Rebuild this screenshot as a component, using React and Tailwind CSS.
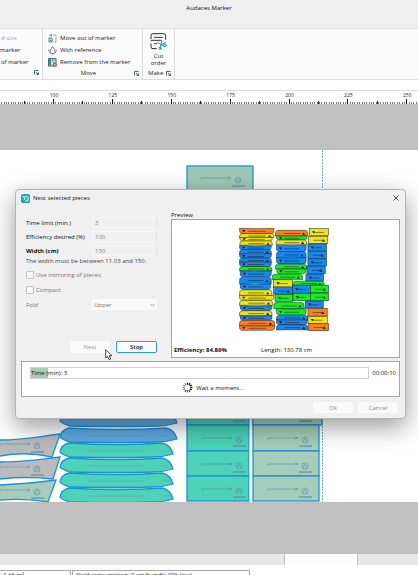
import React, { useState } from "react";

const OUTLINE = "#1b93d8";

// Pieces of the small nesting preview: shape, fill, x, y, width, height
const nestedPieces = [
  ["lens", "o", 22, 20, 104, 16], ["lens", "y", 22, 36, 104, 12], ["lens", "y", 23, 47, 98, 12], ["lens", "y", 23, 58, 98, 13],
  ["lens", "b", 22, 72, 96, 13], ["lens", "b", 22, 84, 96, 13], ["lens", "b", 22, 97, 96, 13], ["lens", "b", 22, 109, 96, 13],
  ["lens", "b", 22, 122, 96, 13], ["lens", "g", 22, 135, 98, 13], ["lens", "b", 24, 148, 94, 18], ["lens", "b", 22, 167, 96, 19],
  ["lens", "b", 24, 187, 92, 17], ["lens", "y", 22, 205, 98, 17], ["lens", "y", 22, 222, 104, 14], ["lens", "y", 22, 237, 100, 15],
  ["lens", "b", 24, 253, 96, 14], ["lens", "y", 22, 268, 98, 15], ["lens", "b", 24, 283, 96, 14], ["lens", "o", 22, 297, 106, 16],
  ["lens", "o", 22, 313, 106, 14],
  ["lens", "o", 130, 26, 98, 17], ["lens", "g", 133, 43, 92, 12], ["lens", "y", 132, 55, 93, 14], ["lens", "b", 133, 71, 90, 19],
  ["lens", "b", 133, 90, 90, 18], ["lens", "b", 133, 108, 90, 19], ["lens", "g", 130, 128, 95, 14], ["lens", "g", 134, 142, 88, 15],
  ["lens", "g", 120, 158, 92, 16], ["rect", "y", 125, 175, 57, 21], ["rect", "b", 125, 198, 57, 20], ["rect", "g", 129, 219, 54, 21],
  ["lens", "g", 125, 243, 92, 19], ["lens", "g", 133, 262, 90, 19], ["lens", "b", 133, 282, 95, 14], ["lens", "b", 133, 296, 93, 14],
  ["lens", "b", 133, 310, 95, 16],
  ["rect", "y", 232, 21, 58, 21], ["rect", "y", 230, 44, 58, 22], ["rect", "b", 228, 67, 56, 21], ["rect", "b", 228, 89, 56, 22],
  ["rect", "b", 228, 112, 56, 21], ["rect", "b", 225, 134, 55, 23], ["rect", "b", 222, 158, 53, 21], ["lens", "g", 182, 179, 95, 12],
  ["rect", "b", 182, 192, 53, 23], ["rect", "g", 236, 191, 54, 23], ["rect", "g", 183, 216, 52, 22], ["rect", "g", 236, 215, 54, 23],
  ["rect", "b", 220, 239, 54, 21], ["rect", "o", 228, 261, 58, 23], ["rect", "y", 228, 285, 58, 21], ["rect", "o", 230, 307, 60, 21],
];

const pieceColors = { o: "#ff7f14", y: "#f2e410", b: "#1488f4", g: "#10f01c" };

const NestPreview = () => (
  <svg viewBox="18 16 276 316" className="w-[92px] h-[105px]">
    {nestedPieces.map(([shape, color, x, y, w, h], index) => {
      const mid = y + h / 2 + 1;
      const flip = index % 2 === 0;
      const tip = flip ? x + 13 : x + w - 13;
      return (
        <g key={index} stroke="#101820" strokeWidth="1.5">
          {shape === "rect" ? (
            <rect x={x} y={y} width={w} height={h} fill={pieceColors[color]} />
          ) : (
            <path
              fill={pieceColors[color]}
              d={
                flip
                  ? `M${x} ${y} Q${x + w / 2} ${y + 2} ${x + w} ${y} L${x + w - 1} ${y + h - 4} L${x + w - 7} ${y + h} H${x + 7} L${x + 1} ${y + h - 4} Z`
                  : `M${x + 7} ${y} H${x + w - 7} L${x + w - 1} ${y + 4} L${x + w} ${y + h} Q${x + w / 2} ${y + h - 2} ${x} ${y + h} L${x + 1} ${y + 4} Z`
              }
            />
          )}
          <path d={`M${x + w * 0.26} ${mid} H${x + w * 0.76}`} />
          <path
            fill="#101820"
            stroke="none"
            d={flip ? `M${tip - 5} ${mid - 4} h10 l-5 7 z` : `M${tip - 5} ${mid + 4} h10 l-5 -7 z`}
          />
        </g>
      );
    })}
  </svg>
);

// Grain line arrow and the size mark printed on every piece
const PieceMark = ({ x, y }) => (
  <g stroke="#5d88ad" strokeWidth="0.8" fill="none" opacity="0.7">
    <path d={`M${x} ${y + 2} v-2 h30 m-3 -1 l3 1 l-3 1`} />
    <circle cx={x + 37} cy={y + 2} r="3" />
    <path d={`M${x + 35} ${y + 4} l2 -4 l2 4`} />
    <path d={`M${x + 31} ${y + 8} h13`} strokeWidth="1.5" />
  </g>
);

const lensRows = [
  { y: 262, w: 117, fill: "#5fa9e4" },
  { y: 278, w: 117, fill: "#5fa9e4" },
  { y: 293, w: 113, fill: "#4cd3b8" },
  { y: 308, w: 113, fill: "#4cd3b8" },
  { y: 323, w: 113, fill: "#4cd3b8" },
  { y: 338, w: 113, fill: "#4cd3b8" },
];

const MarkerCanvas = () => (
  <svg width="100%" height="352" className="block bg-white" stroke={OUTLINE} strokeWidth="1.3">
    <path d="M0 290 C25 290 35 287 60 284 L52 307 Q25 301 0 306" fill="#b9bbbd" />
    <path d="M0 312 C25 312 35 310 60 307 L53 329 Q25 326 0 329" fill="#b9bbbd" />
    <path d="M0 335 C20 334 35 333 56 330 L48 352 Q25 348 0 350" fill="#a6cdba" />
    {[298, 321, 344].map((y) => (
      <PieceMark key={y} x={0} y={y - 4} />
    ))}
    {lensRows.map(({ y, w, fill }) => (
      <g key={y}>
        <path
          fill={fill}
          d={`M69 ${y} Q118 ${y + 3} ${w + 49} ${y} Q${w + 58} ${y + 2} ${w + 60} ${y + 11} Q${w + 50} ${y + 14} ${w + 40} ${y + 14} Q118 ${y + 15} 70 ${y + 14} Q63 ${y + 12} 60 ${y + 9} Q61 ${y + 2} 69 ${y} Z`}
        />
        <path d={`M88 ${y + 8} h56 M160 ${y + 8} h10`} stroke="#6794ad" strokeWidth="0.8" opacity="0.6" />
      </g>
    ))}
    <rect x="187" y="16" width="66" height="260" fill="#9fc9b6" />
    <PieceMark x={201} y={28} />
    {[250, 275, 301, 326].map((y) => (
      <g key={y}>
        <rect x="187" y={y} width="62" height={y === 275 ? 26 : 25} fill="#4cd3b8" />
        <PieceMark x={202} y={y + 13} />
      </g>
    ))}
    <path d="M251 260 V352" stroke="white" strokeWidth="3" />
    {[250, 275, 301, 326].map((y) => (
      <g key={y}>
        <rect x="253" y={y} width={y === 250 ? 69 : 66} height={y === 275 ? 26 : 25} fill="#a6cdba" />
        <PieceMark x={268} y={y + 13} />
      </g>
    ))}
    <path d="M322.5 0 V352" strokeWidth="1" strokeDasharray="2 1" stroke="#6fa9cc" />
  </svg>
);

const unit = 2.355;

const Ruler = () => (
  <svg width="100%" height="14" className="block border-t border-[#dcdcdc] bg-white">
    {Array.from({ length: 180 }, (_, i) => i + 78).map((value) => {
      const height = value % 25 === 0 ? 5 : 2;
      return (
        <rect
          key={value}
          x={Math.round(53 + (value - 100) * unit)}
          y={13 - height}
          width="1"
          height={height}
          fill={height === 5 ? "#111111" : "#777777"}
        />
      );
    })}
    {[87.5, 112.5, 137.5, 162.5, 187.5, 212.5, 237.5].map((value) => (
      <rect key={value} x={Math.round(53 + (value - 100) * unit)} y="10" width="1" height="3" fill="#222222" />
    ))}
    {[100, 125, 150, 175, 200, 225, 250].map((value) => (
      <text key={value} x={54 + (value - 100) * unit} y="6" fontSize="5" textAnchor="middle" fill="#222222">
        {value}
      </text>
    ))}
  </svg>
);

const Launcher = () => (
  <button aria-label="More options" className="block">
    <svg width="5" height="5" viewBox="0 0 10 10" fill="none" stroke="#1f5f6b" strokeWidth="1.8">
      <path d="M1 9 V1 H9 M4 4 L9 9 M9 5 V9 H5" />
    </svg>
  </button>
);

const MoveOutIcon = () => (
  <svg width="9" height="9" viewBox="0 0 27 27" fill="none">
    <path d="M3 12 h9 v12 h-9 z" stroke="#4d5357" strokeWidth="2.5" />
    <path d="M4 6 q1 -4 7 -3 M8 0 l4 3 l-4 4" stroke="#1896a8" strokeWidth="2.5" />
    <path d="M16 3 h8 v21 h-8" stroke="#333333" strokeWidth="2" strokeDasharray="4 3" />
    <path d="M6 17 h4 v4 h-4 z" fill="#1896a8" />
  </svg>
);

const ReferenceIcon = () => (
  <svg width="9" height="9" viewBox="0 0 27 27" fill="none">
    <path d="M10 7 L13.500 2 L17 7 L20 10 L22 20 L16 22 H11 L5 20 L7 10 Z" stroke="#333333" strokeWidth="2.2" />
    <path d="M0 13 h3 M24 13 h3 M11 24 h5" stroke="#1896a8" strokeWidth="3" />
  </svg>
);

const RemoveIcon = () => (
  <svg width="9" height="9" viewBox="0 0 27 27" fill="none">
    <rect x="2" y="2" width="22" height="22" fill="#d6eef0" stroke="#2b4248" strokeWidth="2.5" />
    <path d="M3 3 h6 v20 h-6 z" fill="#1896a8" />
    <path d="M12 6 h9 M12 6 l6 9" stroke="#1896a8" strokeWidth="2.5" />
    <circle cx="20" cy="20" r="6.500" fill="#e04848" />
    <path d="M17.500 17.500 l5 5 m0 -5 l-5 5" stroke="white" strokeWidth="1.8" />
  </svg>
);

const CutOrderIcon = () => (
  <svg width="17" height="17" viewBox="0 0 51 51" fill="none" strokeLinecap="round">
    <path d="M19 47 H9 Q3 47 3 41 V33 M3 17 V8 Q3 2 9 2 H41 Q47 2 47 8 V19" stroke="#262c30" strokeWidth="3" />
    <path d="M13 13 H37 M3 22 H33 M13 32 H20" stroke="#262c30" strokeWidth="2.800" />
    <path d="M23 29 L41 39 M31 44 L35 25" stroke="#149cae" strokeWidth="3" />
    <circle cx="45" cy="37" r="4" stroke="#149cae" strokeWidth="3" />
    <circle cx="30" cy="46" r="3.500" stroke="#149cae" strokeWidth="3" />
    <path d="M33 36 L46 28" stroke="#149cae" strokeWidth="3" />
  </svg>
);

const moveActions = [
  { label: "Move out of marker", icon: <MoveOutIcon /> },
  { label: "With reference", icon: <ReferenceIcon /> },
  { label: "Remove from the marker", icon: <RemoveIcon /> },
];

const Ribbon = () => (
  <nav className="flex h-[52px] shrink-0 border-y border-[#dcdcdc] bg-[#fbfbfb] text-[#222222]">
    <div className="flex w-[43px] flex-col justify-between border-r border-[#dcdcdc] pt-[3px] pb-1">
      <div className="flex flex-col items-start whitespace-nowrap leading-[12px]">
        <button className="pl-px text-[#a0a0a0]" disabled>d size</button>
        <button>marker</button>
        <button className="pl-px">of marker</button>
      </div>
      <div className="flex justify-end pr-[3px]"><Launcher /></div>
    </div>
    <div className="flex w-[100px] flex-col justify-between border-r border-[#dcdcdc] pt-[3px] pb-[3px]">
      <div className="flex flex-col items-start pl-[5px] leading-[12px]">
        {moveActions.map(({ label, icon }) => (
          <button key={label} className="flex items-center gap-[3px] whitespace-nowrap">
            {icon}
            {label}
          </button>
        ))}
      </div>
      <div className="flex items-center pr-[3px] leading-[6px]">
        <span className="flex-1 text-center">Move</span>
        <Launcher />
      </div>
    </div>
    <div className="flex w-8 flex-col justify-between border-r border-[#dcdcdc] pt-1 pb-[3px]">
      <button className="flex flex-col items-center leading-[7px]">
        <CutOrderIcon />
        <span className="pt-[3px]">Cut</span>
        <span>order</span>
      </button>
      <div className="flex items-center justify-between pr-[3px] pl-[5px] leading-[6px]">
        <span>Make</span>
        <Launcher />
      </div>
    </div>
  </nav>
);

const Cursor = () => (
  <svg width="8" height="12" viewBox="0 0 24 36" className="absolute top-2 left-[35px]">
    <path d="M2 2 V27 L8 22 L12 32 L17 30 L13 20 H21 Z" fill="white" stroke="#222222" strokeWidth="2.4" />
  </svg>
);

const Spinner = () => (
  <svg width="11" height="11" viewBox="-11 -11 22 22" strokeWidth="2.600">
    {[0, 30, 60, 90, 120, 150, 180, 210, 240, 270, 300, 330].map((angle) => (
      <path
        key={angle}
        d="M0 -5.500 V-10"
        transform={`rotate(${angle})`}
        stroke={angle < 150 ? "#1c1c1c" : angle < 240 ? "#555555" : "#8c8c8c"}
      />
    ))}
  </svg>
);

const fields = [
  { id: "time", label: "Time limit (min.)", value: "3" },
  { id: "efficiency", label: "Efficiency desired (%)", value: "100" },
  { id: "width", label: "Width (cm)", value: "150", bold: true },
];

const NestDialog = () => {
  const [open, setOpen] = useState(true);

  if (!open) {
    return null;
  }

  return (
    <section
      role="dialog"
      aria-label="Nest selected pieces"
      className="absolute top-[189px] right-3 left-[15px] rounded border border-[#b4b4b4] bg-[#f0f0f0] px-[5px] pb-[5px] text-[#111111] shadow-[0_8px_24px_rgba(0,0,0,0.4)]"
    >
      <header className="flex h-4 items-center gap-[3px]">
        <svg width="9" height="9" viewBox="0 0 27 27" fill="none">
          <rect width="27" height="27" rx="5" fill="#18a8b8" />
          <path d="M5 8 h5 v10 M13 10 l5 -4 l4 4 v3 l-4 1 l4 3 l-3 4 h-6" stroke="white" strokeWidth="3" />
        </svg>
        <h1 className="flex-1 font-medium">Nest selected pieces</h1>
        <button aria-label="Close" className="pr-px">
          <svg width="6" height="6" viewBox="0 0 12 12" stroke="#333333" strokeWidth="1.8" onClick={() => setOpen(false)}>
            <path d="M1 1 L11 11 M11 1 L1 11" />
          </svg>
        </button>
      </header>

      <div className="flex gap-[14px] pt-[6px]">
        <form className="flex w-[136px] shrink-0 flex-col pt-[5px] pl-[5px]" onSubmit={(e) => e.preventDefault()}>
          <div className="flex flex-col gap-[3px]">
            {fields.map(({ id, label, value, bold }) => (
              <div key={id} className="flex h-[11px] items-center">
                <label htmlFor={id} className={bold ? "w-[66px] font-bold" : "w-[66px] font-medium"}>{label}</label>
                <input
                  id={id}
                  defaultValue={value}
                  disabled
                  className="h-[11px] w-0 flex-1 border border-[#f6f6f6] border-r-[#e2e2e2] px-[2px] text-[#8a8a8a]"
                />
              </div>
            ))}
          </div>
          <p className="pt-px leading-[9px] whitespace-nowrap text-[#444444]">The width must be between 11.03 and 150.</p>
          <div className="flex flex-col gap-[6px] pt-1 text-[#777777]">
            {["Use mirroring of pieces", "Compact"].map((label) => (
              <label key={label} className="flex h-[9px] items-center gap-[2px]">
                <input type="checkbox" disabled className="size-2 appearance-none rounded-[1px] border border-[#c4c4c4] bg-[#f7f7f7]" />
                {label}
              </label>
            ))}
          </div>
          <div className="flex items-center pt-[5px] text-[#777777]">
            <label htmlFor="fold" className="w-[66px]">Fold</label>
            <div className="relative flex-1">
              <select id="fold" disabled className="h-[11px] w-full appearance-none rounded-[1px] bg-[#fafafa] px-[2px] text-[#777777]">
                <option>Upper</option>
              </select>
              <svg width="5" height="4" viewBox="0 0 10 8" className="absolute top-1 right-[2px]" fill="none" stroke="#999999" strokeWidth="1.8">
                <path d="M1 2 L5 6 L9 2" />
              </svg>
            </div>
          </div>
          <div className="flex justify-end gap-[6px] pt-[31px]">
            <div className="relative">
              <button disabled className="h-3 w-10 rounded-[2px] bg-[#fafafa] text-[#999999]">Nest</button>
              <Cursor />
            </div>
            <button className="h-3 w-[41px] rounded-[2px] border border-[#2a9fd6] bg-[#fafafa] font-semibold">Stop</button>
          </div>
        </form>

        <div className="flex min-w-0 flex-1 flex-col">
          <h2 className="leading-[7px]">Preview</h2>
          <div className="flex flex-col border border-[#a4a4a4] bg-white">
            <div className="flex h-[123px] justify-center pt-[7px] pr-[3px]">
              <NestPreview />
            </div>
            <div className="flex h-[14px] items-center px-[2px]">
              <strong className="w-[87px]">Efficiency: 84.86%</strong>
              <span>Length: 130.78 cm</span>
            </div>
          </div>
        </div>
      </div>

      <div className="mt-[3px] border border-[#a4a4a4] bg-white pt-[5px] pr-[3px] pl-2">
        <div className="flex items-center gap-[3px]">
          <div className="flex h-3 flex-1 items-center border border-[#d0d0d0] bg-linear-to-r from-[#a3cdb7] from-5% to-white to-5% font-medium">
            Time (min): 3
          </div>
          <time className="font-medium">00:00:10</time>
        </div>
        <div className="flex h-[17px] items-center justify-center gap-[3px] font-medium">
          <Spinner />
          Wait a moment...
        </div>
      </div>

      <footer className="flex justify-end gap-[5px] pt-[5px] pr-[2px] text-[#8c8c8c]">
        <button disabled className="h-[11px] w-10 rounded-[2px] bg-[#fafafa]">Ok</button>
        <button disabled className="h-[11px] w-10 rounded-[2px] bg-[#fafafa]">Cancel</button>
      </footer>
    </section>
  );
};

const App = () => {
  return (
    <div className="relative flex h-screen flex-col overflow-hidden bg-white font-['Open_Sans',sans-serif] text-[6px] leading-[8px]">
      <header className="flex h-7 shrink-0 justify-center bg-[#efefef] pt-1 font-medium text-[#111111]">Audaces Marker</header>
      <Ribbon />
      <main className="pt-[10px]">
        <Ruler />
        <div className="bg-[#c0c0c0] pt-[46px] pb-[52px]">
          <MarkerCanvas />
        </div>
        {/* Horizontal scrollbar */}
        <div className="flex h-[11px] bg-[#e7e7e7] pl-[68%]">
          <div className="w-[74px] border-x border-[#c0c0c0] bg-[#fcfcfc]"></div>
        </div>
      </main>
      <footer className="flex gap-px pt-[5px] leading-[8px] whitespace-nowrap text-[#222222]">
        <div className="w-[71px] border border-l-0 border-[#a8a8a8]">: 1.66 m²</div>
        <div className="w-[178px] border border-[#a8a8a8] pl-[3px]">Yield consumption: 0 cm/bundle (0% loss)</div>
      </footer>
      <NestDialog />
    </div>
  );
};

export default App;
